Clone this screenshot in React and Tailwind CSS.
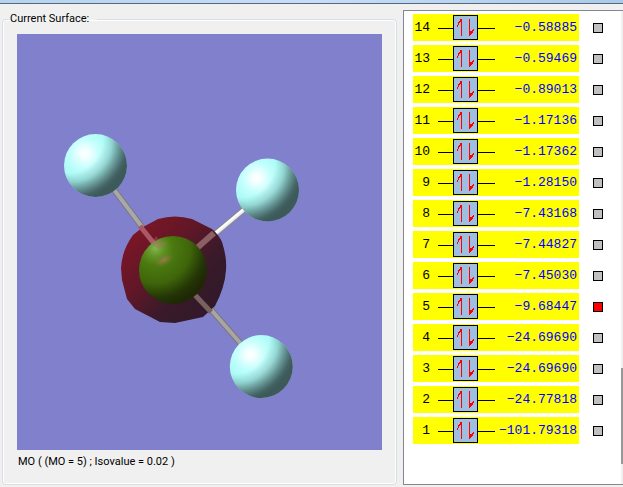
import { useState } from "react";

const ORBITALS = [
  { id: 14, energy: "−0.58885" },
  { id: 13, energy: "−0.59469" },
  { id: 12, energy: "−0.89013" },
  { id: 11, energy: "−1.17136" },
  { id: 10, energy: "−1.17362" },
  { id: 9, energy: "−1.28150" },
  { id: 8, energy: "−7.43168" },
  { id: 7, energy: "−7.44827" },
  { id: 6, energy: "−7.45030" },
  { id: 5, energy: "−9.68447" },
  { id: 4, energy: "−24.69690" },
  { id: 3, energy: "−24.69690" },
  { id: 2, energy: "−24.77818" },
  { id: 1, energy: "−101.79318" },
];

const OUTER_ATOMS = [
  { cx: 95.5, cy: 165.5 },
  { cx: 267.5, cy: 190 },
  { cx: 261.3, cy: 366.5 },
];

const SURFACE =
  "M158 219 Q175 214 192 219 L212 229 Q219 235 222 242 Q227 257 226 270 Q225 287 215 306 L203 317 L175 323 L160 322 L135 309 L127 299 L122 280 L121 268 Q122 250 133 235 L143 227 Z";

const Molecule = () => (
  <svg
    viewBox="17 34 365 416"
    className="block w-full bg-[#8080cc]"
    role="img"
    aria-label="Molecular orbital surface"
  >
    <defs>
      <radialGradient id="atom" cx="0.33" cy="0.31" r="0.76">
        <stop offset="0" stopColor="#ffffff" />
        <stop offset="0.1" stopColor="#f2ffff" />
        <stop offset="0.32" stopColor="#c0fffc" />
        <stop offset="0.55" stopColor="#aafaf5" />
        <stop offset="0.85" stopColor="#8ed2cf" />
        <stop offset="1" stopColor="#78b2b0" />
      </radialGradient>
      {/* large off-canvas radius gives the shadow edge its slight curve */}
      <radialGradient id="shade" cx="0.05" cy="0.05" r="1.1">
        <stop offset="0.52" stopColor="#3d595a" stopOpacity="0" />
        <stop offset="0.66" stopColor="#3d595a" stopOpacity="0.22" />
        <stop offset="0.78" stopColor="#3d595a" stopOpacity="0.6" />
        <stop offset="0.88" stopColor="#3d595a" stopOpacity="0.92" />
        <stop offset="0.94" stopColor="#3d595a" />
      </radialGradient>
      <radialGradient id="center" cx="0.24" cy="0.18" r="0.85">
        <stop offset="0" stopColor="#84b552" />
        <stop offset="0.14" stopColor="#629426" />
        <stop offset="0.3" stopColor="#4b7a10" />
        <stop offset="0.6" stopColor="#3f660a" />
        <stop offset="0.85" stopColor="#243606" />
        <stop offset="1" stopColor="#1f2804" />
      </radialGradient>
      <linearGradient id="surface" x1="0.1" y1="0.15" x2="0.8" y2="0.8">
        <stop offset="0" stopColor="#7c1626" />
        <stop offset="0.4" stopColor="#611727" />
        <stop offset="0.75" stopColor="#391a2a" />
        <stop offset="1" stopColor="#331929" />
      </linearGradient>
      <radialGradient id="glint">
        <stop offset="0" stopColor="#a67a58" stopOpacity="0.85" />
        <stop offset="1" stopColor="#7c7a30" stopOpacity="0" />
      </radialGradient>
    </defs>

    {/* bonds outside the surface */}
    <g strokeWidth="6">
      <path d="M112 187 L145 231" stroke="#777777" />
      <path d="M197 249 L246 208" stroke="#888888" />
      <path d="M207 305 L242 345" stroke="#777777" />
    </g>
    <g strokeWidth="4">
      <path d="M112 187 L145 231" stroke="#aaa7a7" />
      <path d="M197 249 L246 208" stroke="#e9e9e9" />
      <path d="M207 305 L242 345" stroke="#aaa5a5" />
    </g>
    <path d="M209 238 L245 208" stroke="#ffffff" strokeWidth="2" />

    <path d={SURFACE} fill="url(#surface)" />

    {/* bonds seen through the surface */}
    <path d="M140 226 L156 246" stroke="#a85866" strokeWidth="5" />
    <path d="M197 248 L214 233" stroke="#8c6062" strokeWidth="6" />
    <path d="M194 294 L211 312" stroke="#79615f" strokeWidth="5" />

    <circle cx="173" cy="270" r="34" fill="url(#center)" />
    <ellipse
      cx="164"
      cy="260"
      rx="11"
      ry="6"
      fill="url(#glint)"
      transform="rotate(-28 164 260)"
    />
    <path d="M151 243 L156 236 L160 241 L168 243 L158 249 Z" fill="#b56a70" opacity="0.35" />

    {OUTER_ATOMS.map((atom) => (
      <g key={atom.cy}>
        <circle cx={atom.cx} cy={atom.cy} r="31.5" fill="url(#atom)" />
        <circle cx={atom.cx} cy={atom.cy} r="31.5" fill="url(#shade)" />
      </g>
    ))}
  </svg>
);

const Occupancy = () => (
  <svg width="57" height="27" viewBox="0 0 57 27" shapeRendering="crispEdges" className="block">
    <path d="M0 14.5 H57" stroke="#000" />
    <rect x="15.5" y="1.5" width="24" height="24" fill="#a0bfe0" stroke="#000" />
    <path
      d="M23 5h1v17h-1z M22 5h1v3h-1z M21 7h1v2h-1z M20 8h1v3h-1z M19 11h1v2h-1z"
      fill="#ff0000"
    />
    <path
      d="M31 5h1v17h-1z M32 17h1v4h-1z M33 17h1v3h-1z M34 16h1v3h-1z M35 15h1v2h-1z"
      fill="#ff0000"
    />
  </svg>
);

const App = () => {
  const [selected, setSelected] = useState([5]);

  const toggle = (id) =>
    setSelected((ids) =>
      ids.includes(id) ? ids.filter((item) => item !== id) : [...ids, id]
    );

  return (
    <div className="flex min-h-screen flex-col overflow-hidden bg-[#f0f0f0] text-black">
      <div className="h-1 border-b border-[#5a6778] bg-linear-to-r from-[#b5d3ef] via-[#c6dff8] to-[#a9caea]" />
      <main className="flex items-start">
        <fieldset className="ml-0.5 mt-1.5 min-w-0 flex-1 rounded-sm border border-[#d5dfe5] px-3.5 pb-3 font-[Roboto,Arial,sans-serif] text-[11px] shadow-[inset_0_0_0_1px_#fff]">
          <legend className="-ml-2 pl-px pr-2 leading-4.5">Current Surface:</legend>
          <figure className="pt-1.5">
            <Molecule />
            <figcaption className="pt-1 pb-0.5 pl-px leading-4">
              MO ( (MO = 5) ; Isovalue = 0.02 )
            </figcaption>
          </figure>
        </fieldset>

        <section className="ml-1.5 mt-1.5 flex w-55 shrink-0 border border-r-0 border-[#828790] bg-white">
          <div className="flex-1 pb-9 pl-[9px]">
            <table className="-mt-px table-fixed border-separate border-spacing-x-0 border-spacing-y-1 font-['Liberation_Mono','Courier_New',monospace] text-[13px]">
              <tbody>
                {ORBITALS.map(({ id, energy }) => (
                  <tr key={id} className="h-[27px]">
                    <th
                      scope="row"
                      className="w-[25px] bg-[#ffff00] p-0 pr-2 text-right font-normal leading-5"
                    >
                      {id}
                    </th>
                    <td className="w-[57px] bg-[#ffff00] p-0">
                      <Occupancy />
                    </td>
                    <td className="w-[84px] bg-[#ffff00] p-0 pr-0.5 text-right leading-5 text-[#0000ff]">
                      {energy}
                    </td>
                    <td className="p-0 pl-3.5">
                      <input
                        type="checkbox"
                        aria-label={`Orbital ${id}`}
                        checked={selected.includes(id)}
                        onChange={() => toggle(id)}
                        className="block size-2.5 appearance-none border border-black bg-[#c0c0c0] checked:bg-[#ff0000]"
                      />
                    </td>
                  </tr>
                ))}
              </tbody>
            </table>
          </div>
          <div className="flex w-0.5 flex-col justify-end bg-[#f0f0f0] pb-5">
            <div className="h-24 bg-[#979797]" />
          </div>
        </section>
      </main>
    </div>
  );
};

export default App;
